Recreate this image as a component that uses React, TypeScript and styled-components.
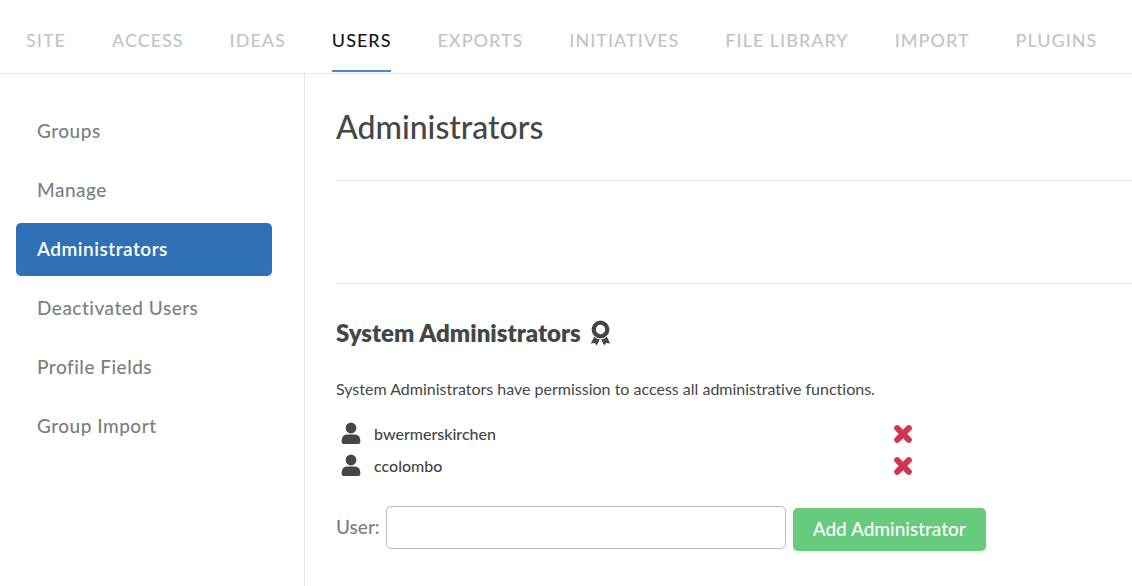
import React from 'react';
import styled, { createGlobalStyle } from 'styled-components';

const GlobalStyle = createGlobalStyle`
  * { box-sizing: border-box; }
  body {
    margin: 0;
    background: #fff;
    color: #454648;
    font-family: Lato, "Open Sans", sans-serif;
    font-size: 16px;
    font-weight: 500;
    font-variant-ligatures: none;
    line-height: 24px;
  }
`;

const Page = styled.div`
  display: flex;
  flex-direction: column;
  min-height: 100vh;
`;

const TopNav = styled.nav`
  display: flex;
  gap: 46px;
  padding: 8px 26px 1px;
  border-bottom: 1px solid #e6e7e8;
`;

const TopLink = styled.a<{ $active?: boolean }>`
  padding: 20px 0 18px;
  border-bottom: 2px solid ${(p) => (p.$active ? '#4a8ac9' : 'transparent')};
  color: ${(p) => (p.$active ? '#17181a' : '#bfc4c8')};
  font-size: 18px;
  letter-spacing: 1px;
  text-decoration: none;
  text-transform: uppercase;
  white-space: nowrap;
`;

const Body = styled.div`
  display: flex;
  flex: 1;
`;

const Sidebar = styled.nav`
  display: flex;
  flex: 0 0 305px;
  flex-direction: column;
  gap: 6px;
  padding: 31px 32px 32px 16px;
  border-right: 1px solid #e6e7e8;
`;

const SideLink = styled.a<{ $active?: boolean }>`
  padding: 14px 21px 15px;
  border-radius: 5px;
  background: ${(p) => (p.$active ? '#2f70b7' : 'transparent')};
  color: ${(p) => (p.$active ? '#fff' : '#7b7f82')};
  font-size: 19px;
  font-weight: ${(p) => (p.$active ? 600 : 500)};
  letter-spacing: 0.5px;
  text-decoration: none;
`;

const Main = styled.main`
  flex: 1;
  min-width: 0;
  padding-left: 31px;
`;

const Title = styled.h1`
  margin: 0;
  padding: 33px 0;
  font-size: 32px;
  font-weight: 500;
  line-height: 40px;
`;

const Toolbar = styled.div`
  height: 104px;
  border: solid #e6e7e8;
  border-width: 1px 0;
`;

const SectionTitle = styled.h2`
  display: flex;
  align-items: center;
  gap: 9px;
  margin: 33px 0 28px;
  font-size: 24px;
  font-weight: 800;
  line-height: 32px;
`;

const Description = styled.p`
  margin: 0 0 17px;
  font-weight: 400;
`;

const AdminList = styled.ul`
  width: 580px;
  margin: 0 0 24px;
  padding: 0;
  list-style: none;
`;

const AdminRow = styled.li`
  display: flex;
  align-items: center;
  height: 32px;
  padding: 0 4px;
`;

const UserName = styled.span`
  flex: 1;
  padding-left: 12px;
`;

const RemoveButton = styled.button`
  display: flex;
  padding: 0;
  border: 0;
  background: none;
  cursor: pointer;
`;

const AddForm = styled.form`
  display: flex;
  align-items: flex-start;
  color: #7b7f82;
  font-size: 19px;
`;

const FieldLabel = styled.label`
  padding-top: 9px;
  margin-right: 6px;
`;

const UserInput = styled.input`
  width: 400px;
  height: 43px;
  padding: 0 12px;
  border: 1px solid #bbbdbf;
  border-radius: 5px;
  background: #fff;
  color: #454648;
  font: inherit;
`;

const AddButton = styled.button`
  height: 43px;
  margin: 2px 0 0 7px;
  padding: 0 20px 2px;
  border: 0;
  border-radius: 5px;
  background: #66cb7c;
  box-shadow: 0 1px 3px rgba(0, 0, 0, 0.1);
  color: #fff;
  font: inherit;
  cursor: pointer;
`;

const RibbonIcon = () => (
  <svg width="21" height="26" viewBox="0 0 21 26" aria-hidden="true">
    <circle cx="10.5" cy="9.5" r="6.8" fill="none" stroke="#454648" strokeWidth="4.2" />
    <path d="M4.2 16.8Q6 19 9.8 19.4L6.8 25.4L4.9 22.9L0.8 23.4Z" fill="#454648" />
    <path d="M16.8 16.8Q15 19 11.2 19.4L14.2 25.4L16.1 22.9L20.2 23.4Z" fill="#454648" />
  </svg>
);

const UserIcon = () => (
  <svg width="22" height="24" viewBox="0 0 22 24" aria-hidden="true">
    <circle cx="11" cy="6" r="5.4" fill="#454648" />
    <path d="M7 12.4H15Q20.3 13 20.3 18.6V20Q20.3 22 18.3 22H3.7Q1.7 22 1.7 20V18.6Q1.7 13 7 12.4Z" fill="#454648" />
  </svg>
);

const CrossIcon = () => (
  <svg width="18" height="18" viewBox="0 0 18 18" aria-hidden="true">
    <path d="M3.2 3.2L14.8 14.8M14.8 3.2L3.2 14.8" stroke="#d1344f" strokeWidth="6" strokeLinecap="round" />
  </svg>
);

const sections = ['Site', 'Access', 'Ideas', 'Users', 'Exports', 'Initiatives', 'File Library', 'Import', 'Plugins'];
const userPages = ['Groups', 'Manage', 'Administrators', 'Deactivated Users', 'Profile Fields', 'Group Import'];
const admins = ['bwermerskirchen', 'ccolombo'];

export default function App() {
  return (
    <Page>
      <GlobalStyle />
      <TopNav aria-label="Sections">
        {sections.map((name) => (
          <TopLink key={name} href="#" $active={name === 'Users'}>{name}</TopLink>
        ))}
      </TopNav>
      <Body>
        <Sidebar aria-label="Users">
          {userPages.map((name) => (
            <SideLink key={name} href="#" $active={name === 'Administrators'}>{name}</SideLink>
          ))}
        </Sidebar>
        <Main>
          <Title>Administrators</Title>
          <Toolbar />
          <SectionTitle>System Administrators <RibbonIcon /></SectionTitle>
          <Description>System Administrators have permission to access all administrative functions.</Description>
          <AdminList>
            {admins.map((name) => (
              <AdminRow key={name}>
                <UserIcon />
                <UserName>{name}</UserName>
                <RemoveButton type="button" aria-label={`Remove ${name}`}><CrossIcon /></RemoveButton>
              </AdminRow>
            ))}
          </AdminList>
          <AddForm onSubmit={(e) => e.preventDefault()}>
            <FieldLabel htmlFor="user">User:</FieldLabel>
            <UserInput id="user" type="text" />
            <AddButton type="submit">Add Administrator</AddButton>
          </AddForm>
        </Main>
      </Body>
    </Page>
  );
}
